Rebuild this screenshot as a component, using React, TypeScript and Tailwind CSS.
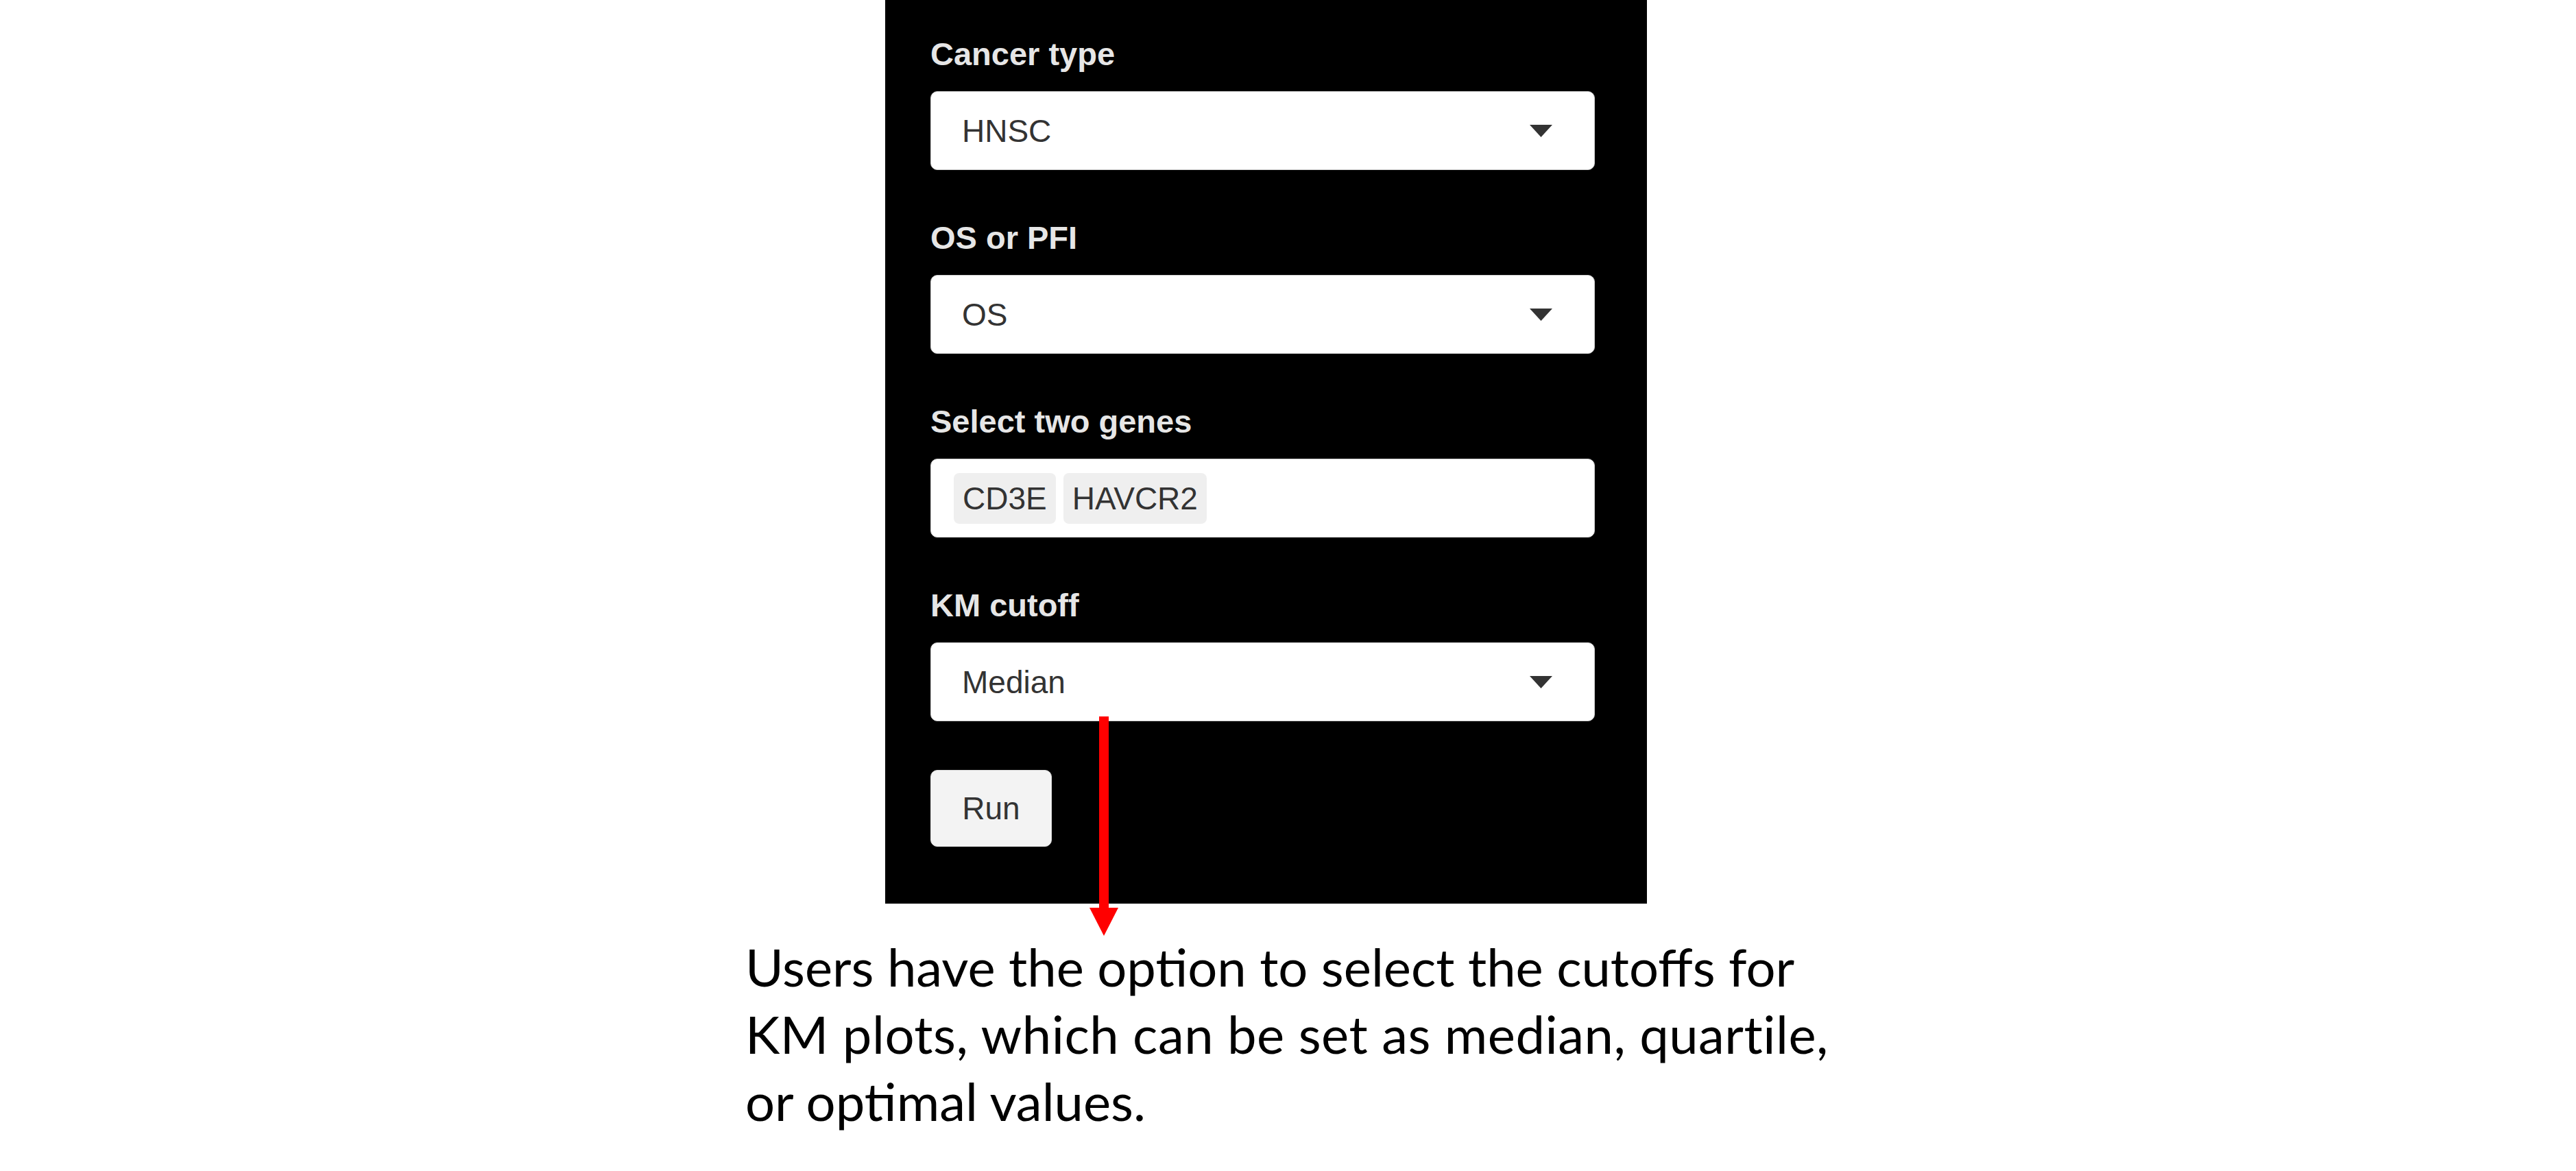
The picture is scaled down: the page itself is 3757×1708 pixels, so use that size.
import React from 'react';

const Caret: React.FC = () => (
  <svg width="33" height="18" viewBox="0 0 33 18" className="shrink-0">
    <path d="M0 0 L33 0 L16.5 18 Z" fill="#333333" />
  </svg>
);

interface SelectBoxProps {
  value: string;
}

const SelectBox: React.FC<SelectBoxProps> = ({ value }) => (
  <div className="flex items-center justify-between h-[115px] w-full bg-white border border-[#d0d0d0] rounded-[10px] pl-[45px] pr-[61px]">
    <span className="text-[46px] leading-none text-[#333333]">{value}</span>
    <Caret />
  </div>
);

const Label: React.FC<{ text: string }> = ({ text }) => (
  <div className="text-[47px] leading-[50px] font-bold text-[#e6e6e6] mb-[29px]">{text}</div>
);

const App: React.FC = () => {
  const genes = ['CD3E', 'HAVCR2'];

  return (
    <div className="relative w-[3757px] h-[1708px] bg-white overflow-hidden">
      {/* Sidebar form panel */}
      <div className="ml-[1291px] w-[1111px] bg-black pt-[54px] pb-[83px] pl-[66px] pr-[76px] flex flex-col font-['Liberation_Sans',Arial,sans-serif]">
        <Label text="Cancer type" />
        <SelectBox value="HNSC" />

        <div className="mt-[74px]">
          <Label text="OS or PFI" />
          <SelectBox value="OS" />
        </div>

        <div className="mt-[74px]">
          <Label text="Select two genes" />
          <div className="flex items-center gap-[11px] h-[115px] w-full bg-white border border-[#d0d0d0] rounded-[10px] pl-[33px]">
            {genes.map((g) => (
              <span
                key={g}
                className="flex items-center h-[74px] px-[13px] rounded-[8px] bg-[#efefef] text-[46px] leading-none text-[#333333]"
              >
                {g}
              </span>
            ))}
          </div>
        </div>

        <div className="mt-[74px]">
          <Label text="KM cutoff" />
          <SelectBox value="Median" />
        </div>

        <div className="mt-[71px]">
          <button className="flex items-center justify-center w-[177px] h-[112px] rounded-[10px] bg-[#f3f3f3] border border-[#dddddd] text-[46px] leading-none text-[#333333]">
            Run
          </button>
        </div>
      </div>

      {/* Caption */}
      <div className="ml-[1087px] mt-[43px] font-['Lato','Open_Sans',sans-serif] text-[76px] leading-[98px] text-black">
        <div className="whitespace-nowrap">Users have the option to select the cutoffs for</div>
        <div className="whitespace-nowrap tracking-[0.5px]">KM plots, which can be set as median, quartile,</div>
        <div className="whitespace-nowrap">or optimal values.</div>
      </div>

      {/* Red arrow pointing from the KM cutoff select to the caption */}
      <svg className="absolute left-[1589px] top-[1045px]" width="42" height="320" viewBox="0 0 42 320">
        <rect x="14" y="0" width="14" height="280" fill="#ff0000" />
        <path d="M0 279 L42 279 L21 320 Z" fill="#ff0000" />
      </svg>
    </div>
  );
};

export default App;
